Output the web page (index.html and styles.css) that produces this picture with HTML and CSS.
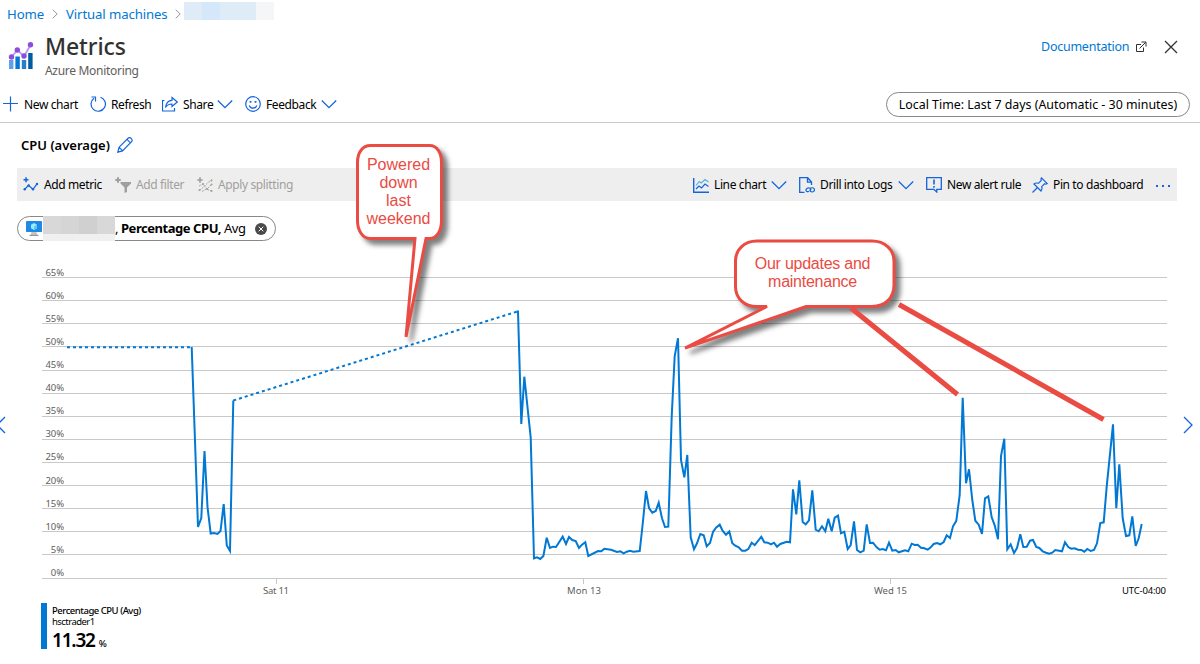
FILE: index.html
```
<!DOCTYPE html>
<html lang="en">
<head>
    <meta charset="UTF-8">
    <meta name="viewport" content="width=device-width, initial-scale=1.0">
    <title>Metrics - Azure Monitoring</title>
    <link rel="stylesheet" href="styles.css">
</head>
<body>
    <svg class="defs" width="0" height="0">
        <symbol id="chevron" viewBox="0 0 16 16"><path d="M.8 4.500l7.200 7.200 7.200-7.200"/></symbol>
        <symbol id="crumb" viewBox="0 0 6 10"><path d="M.7.7L5.200 5 .7 9.300"/></symbol>
    </svg>

    <nav class="breadcrumb">
        <a class="crumb-home">Home</a>
        <svg class="crumb-sep" width="6" height="10"><use href="#crumb"/></svg>
        <a class="crumb-vms">Virtual machines</a>
        <svg class="crumb-sep" width="6" height="10"><use href="#crumb"/></svg>
        <span class="crumb-hidden"></span>
    </nav>

    <header>
        <svg class="logo" width="26" height="30" viewBox="0 0 26 30">
            <rect x="1" y="20" width="4.400" height="9" fill="#5ea0ef"/>
            <rect x="7.400" y="16.500" width="4.400" height="12.500" fill="#0078d4"/>
            <rect x="13.800" y="20" width="4.400" height="9" fill="#2b7cc9"/>
            <rect x="20.200" y="13" width="4.400" height="16" fill="#005ba1"/>
            <path d="M3.500 17l6-7 6.500 6.300 6.500-11" fill="none" stroke="#b796f9" stroke-width="1.800"/>
            <g fill="#8b4ddb"><circle cx="3.500" cy="17" r="2.700"/><circle cx="9.300" cy="10" r="2.700"/><circle cx="16" cy="16" r="2.700"/><circle cx="22.500" cy="4.800" r="2.700"/></g>
        </svg>
        <div class="heading">
            <h1>Metrics</h1>
            <p>Azure Monitoring</p>
        </div>
        <a class="doc-link">Documentation</a>
        <svg class="external" width="12" height="12" viewBox="0 0 12 12"><path d="M6 3.500H1.500v7H8.500V6.500M4.500 7.500L10.500 1.500M6.500 1h4.500v4.500"/></svg>
        <svg class="close" width="14" height="14" viewBox="0 0 14 14"><path d="M1 1l12 12M13 1L1 13"/></svg>
    </header>

    <div class="command-bar">
        <button class="command w-new">
            <svg class="icon" viewBox="0 0 16 16"><path d="M7.500.5v15M0 7.500h15"/></svg><span>New chart</span>
        </button>
        <button class="command w-refresh">
            <svg class="icon" viewBox="0 0 16 16"><path d="M10.500 1.200A7.200 7.200 0 1 1 4 2.200M1.500 1h4v4.500"/></svg><span>Refresh</span>
        </button>
        <button class="command w-share">
            <svg class="icon" viewBox="0 0 16 16"><path d="M2.500 4.500h-2v10.500h12v-3M10 1.500l5.300 4.500-5.300 4.500V8c-3 0-5 1-6.500 3.500C4 7.500 6 4.500 10 4.300z"/></svg><span>Share</span><svg class="icon chev"><use href="#chevron"/></svg>
        </button>
        <button class="command w-feedback">
            <svg class="icon" viewBox="0 0 16 16"><circle cx="8" cy="8" r="7.300"/><path d="M4.200 9.500c1.400 3.600 6.200 3.600 7.600 0"/><path d="M5.500 5v1.800M10.500 5v1.800" stroke-width="1.800"/></svg><span>Feedback</span><svg class="icon chev"><use href="#chevron"/></svg>
        </button>
        <button class="time-range">Local Time: Last 7 days (Automatic - 30 minutes)</button>
    </div>

    <main>
        <div class="chart-title">
            <h2>CPU (average)</h2>
            <svg class="icon" viewBox="0 0 16 16"><path d="M.8 15.200l1.300-5L11.300 1c1.800-1.300 4.700 1.300 3.500 3.500l-9.300 9.400zM10 2.400l3.500 3.500M2.200 10.400l3.300 3.300"/></svg>
        </div>

        <div class="toolbar">
            <button class="command w-metric">
                <svg class="icon" viewBox="0 0 16 16"><path d="M3 .3v5M.5 2.800h5" stroke-width="1.500"/><path d="M1.500 12.500l4-4.200 4.500 4 4-5.500"/><g class="dot"><circle cx="1.700" cy="12.300" r="1.200"/><circle cx="5.700" cy="8.500" r="1.200"/><circle cx="10" cy="12.300" r="1.200"/><circle cx="14" cy="7" r="1.200"/></g></svg><span>Add metric</span>
            </button>
            <button class="command disabled w-filter">
                <svg class="icon" viewBox="0 0 16 16"><path d="M3 .3v5.400M.3 3h5.400" stroke-width="2"/><path class="dot" d="M5.500 5H16v1.500l-4 4V15l-2.500 1v-5.500l-4-4z"/></svg><span>Add filter</span>
            </button>
            <button class="command disabled w-split">
                <svg class="icon" viewBox="0 0 16 16"><path d="M3 .3v5.400M.3 3h5.400" stroke-width="1.600"/><path stroke-width=".9" stroke-dasharray="2 1" d="M2 9l4-2 4 5 5-5M2.500 13.500l4-3.500 4-4L14.500 3M5 14.500l4-2.500 5.500 2"/><g class="dot"><circle cx="6" cy="7" r="1"/><circle cx="2.500" cy="13" r="1"/><circle cx="10" cy="12" r="1"/><circle cx="14.500" cy="3.500" r="1"/><circle cx="14.500" cy="7.500" r="1"/><circle cx="14.500" cy="14" r="1"/></g></svg><span>Apply splitting</span>
            </button>
            <button class="command push w-line">
                <svg class="icon" viewBox="0 0 16 16"><path d="M.7 1v14.300H16" stroke-width="1.400"/><path d="M3 8.500l3.200-4 2 1.500L12 2.500l3.500 2.500" stroke="#50b3d9"/><path d="M3 12l3-3 2.500 2 3.500-4 3.500 2.500"/></svg><span>Line chart</span><svg class="icon chev"><use href="#chevron"/></svg>
            </button>
            <button class="command w-logs">
                <svg class="icon" viewBox="0 0 16 16"><path d="M5.500 15.300H.7V.7h8L12.500 5v3M8.500.7v4.500h4" stroke-width="1.300"/><path d="M10 14.500c-5 1-3-4.500.5-3.500 2 .7 1.500 3 0 3M11.500 11c5-1.500 5 4 1.500 4-2.500 0-2.500-2.500-1-3"/></svg><span>Drill into Logs</span><svg class="icon chev"><use href="#chevron"/></svg>
            </button>
            <button class="command w-alert">
                <svg class="icon" viewBox="0 0 16 16"><path d="M.7.700h14.600v11.600h-4.500V15l-3-2.700H.7z" stroke-width="1.300"/><path d="M8 2.500v5M8 9v1.800" stroke-width="1.600"/></svg><span>New alert rule</span>
            </button>
            <button class="command w-pin">
                <svg class="icon" viewBox="0 0 16 16"><path d="M.5 15.500l5-5M9.500.8l5.700 5.700c-1 .8-2 .6-2.600.3L9.700 9.700c.5 1.700.2 3.200-.7 4.300L2 7c1.200-1 2.800-1.200 4.400-.7l2.900-2.900C8.900 2.500 8.900 1.500 9.500.8z"/></svg><span>Pin to dashboard</span>
            </button>
            <svg class="more" width="16" height="4" viewBox="0 0 16 4"><rect x="1" y="2" width="2" height="2"/><rect x="7" y="2" width="2" height="2"/><rect x="13" y="2" width="2" height="2"/></svg>
        </div>

        <div class="metric-pill">
            <svg width="18" height="16" viewBox="0 0 18 16"><rect x="1" width="16" height="11" rx=".8" fill="#1f8ae6"/><path d="M6.500 11h5l1 3.500h-7z" fill="#c4c4c4"/><rect x="4.500" y="13.800" width="9" height="1.200" fill="#999"/><path d="M9 2l3 1.700v3.500L9 9 6 7.200V3.700z" fill="#9cebff"/><path d="M9 5.300l3-1.600v3.500L9 9z" fill="#50d0f5"/></svg>
            <span class="pill-hidden"></span>
            <span class="pill-text">, <b>Percentage CPU,</b> Avg</span>
            <svg class="remove" width="12" height="12" viewBox="0 0 12 12"><circle cx="6" cy="6" r="6"/><path d="M3.700 3.700l4.600 4.600M8.300 3.700L3.700 8.300"/></svg>
        </div>

        <svg class="chart" width="1200" height="352" viewBox="0 248 1200 352">
            <path class="grid" d="M42 277.500h1125M42 300.500h1125M42 323.500h1125M42 346.500h1125M42 370.500h1125M42 393.500h1125M42 416.500h1125M42 439.500h1125M42 462.500h1125M42 485.500h1125M42 508.500h1125M42 531.500h1125M42 554.500h1125M42 578.500h1125M276.500 579v5M583.500 579v5M890.500 579v5"/>
            <g class="y-axis">
                <text x="64" y="276">65%</text>
                <text x="64" y="299">60%</text>
                <text x="64" y="322">55%</text>
                <text x="64" y="345">50%</text>
                <text x="64" y="368">45%</text>
                <text x="64" y="391">40%</text>
                <text x="64" y="414">35%</text>
                <text x="64" y="437">30%</text>
                <text x="64" y="460">25%</text>
                <text x="64" y="484">20%</text>
                <text x="64" y="507">15%</text>
                <text x="64" y="530">10%</text>
                <text x="64" y="553">5%</text>
                <text x="64" y="576">0%</text>
            </g>
            <g class="x-axis">
                <text x="276" y="594" textLength="26">Sat 11</text>
                <text x="584" y="594" textLength="34">Mon 13</text>
                <text x="890.500" y="594" textLength="33">Wed 15</text>
                <text class="zone" x="1144" y="594" textLength="44">UTC-04:00</text>
            </g>
            <path class="series gap" d="M67 347.300H192"/>
            <path class="series gap" d="M233.300 400.500L518 311.300"/>
            <polyline class="series" points="191.700,347 195,441 198,527 201.300,518 204.500,451 207.500,507 210.700,533.500 214,533 217.400,534 220.500,531 223.700,504 226.800,545.500 230,551 233.300,400.500"/>
            <polyline class="series" points="516.500,311.500 518,311.500 521.300,424 524.300,376.700 530.700,437.500 534,558.300 537,557.300 540.300,559 543.400,556 546.700,537.700 550,548 553,546.700 556,547 562.700,536.700 566,544 569,537 572.300,540 575.700,541 579,548 582,544.700 585.300,542.300 588.300,556 598,551 601.300,551.300 604.300,548.700 611,549.700 617,552 620.300,551.300 623.700,553.300 626.700,551.700 630,550.700 633.300,551.700 639.700,551 642.700,524 646,491 649,508 652.300,512.700 655.700,511 658.700,502.700 662,518.300 665,527 668.300,526.700 671.700,416.700 674.700,356 678,338.300 681,460 684.300,477.300 687.300,455 690.700,537.300 694,549.300 697,543.300 700.300,534 703.700,535.300 706.700,546.300 710,543 713,532 716,527.700 719.700,524.700 722.700,531 726,534.700 729.300,531.500 732.300,543.300 735.300,545.700 738.700,547.300 742,550.700 745.300,550.700 748.300,549 751.700,542.700 754.700,545 761.300,536.700 764.300,542.300 767.700,542.700 771,544.300 774,542.700 777,546.700 780.300,544 786.700,541.700 790,542.300 793,489.300 796.300,514.300 799.300,480.300 802.700,522 805.700,524.300 809,520.300 812.300,490.300 815.700,529.700 818.700,531.300 822,526.300 825.300,531.300 828.300,518.700 831.700,531.300 834.700,517.700 838,515.700 841,533.300 844.300,531.700 847.700,549 850.700,545 854,521.300 857,550 860.300,552.300 863.700,550.700 866.700,524.300 870,543 873,542.700 876.700,547.300 879.700,549.700 882.700,549 886,550.300 889,542.700 892.300,550.700 895.700,550 898.700,552.300 905,550.300 908.300,551.300 911.700,543.700 914.700,545 917.700,544.700 921,547.700 924.300,548.300 927.700,549.700 930.700,547.300 933.700,544 937,543 940.300,544.300 943.700,542 946.700,535.300 950,538 953,526.300 956.300,520.800 959.700,495 962.700,397.700 966,483.300 969,469.300 972.300,500 975.300,520.700 978.700,524.700 982,534 985,498.300 988.300,496.300 991.700,517.300 994.700,525.300 998,539.300 1001,456 1004.300,438.700 1007.300,549.300 1010.700,544.300 1014,553 1017,548 1020.300,534.300 1023.300,547 1026.700,546.700 1030,540.700 1033,540 1036.300,547 1039.300,548 1042.700,551.300 1046,552.700 1049.300,553.700 1052.300,552.700 1055.300,550 1062,551.300 1065,542.300 1068.300,547 1071.300,548.700 1074.700,548.300 1078,549.700 1081.300,550 1084.300,551.700 1087.300,549 1090.700,551 1094,550 1097,543.300 1100.300,523 1103.700,522.300 1106.700,486.700 1113,424.300 1116.300,508.300 1119.300,464.300 1122.700,518.300 1126,536 1129.300,535.300 1132.300,516.300 1135.700,546 1138.700,538.300 1141.700,524"/>
            <path class="pager" d="M5 417l-8 8 8 8M1184 417l8 8-8 8"/>
        </svg>

        <div class="legend">
            <div class="legend-name">Percentage CPU (Avg)</div>
            <div class="legend-resource">hsctrader1</div>
            <div class="legend-value"><span>11.32</span><small>%</small></div>
        </div>
    </main>

    <!-- notes drawn over the chart -->
    <svg class="notes" width="1200" height="664" viewBox="0 0 1200 664">
        <path class="note" d="M370.500 145.500h59c8 0 12 8 12 17v58c0 11-5 18-12 18h-3.500L406 337 415 238.500h-44.500c-8 0-13-8-13-18v-58c0-10 5-17 13-17z"/>
        <path class="note" d="M757 241h115c13 0 22 9 22 20v24c0 13-9 21.500-22 21.500h-66L685 348.200 767 306.500h-10c-13 0-21.500-8.500-21.500-20V261c0-11 8.500-20 21.500-20z"/>
        <path class="arrow" d="M851 308l106.500 86.500M899 304.500l204.500 115"/>
    </svg>
    <div class="note-text powered">Powered<br>down<br>last<br>weekend</div>
    <div class="note-text updates">Our updates and<br>maintenance</div>
</body>
</html>
```
FILE: styles.css
```
* {
    box-sizing: border-box;
}
body {
    margin: 0;
    position: relative;
    width: 1200px;
    height: 664px;
    overflow: hidden;
    background-color: #fff;
    color: #000;
    font-family: "Noto Sans", "Open Sans", sans-serif;
    font-size: 12px;
}
svg {
    flex: none;
}
.defs {
    position: absolute;
}
h1, h2, p {
    margin: 0;
}
a {
    color: #0078d4;
}
button {
    font: inherit;
    color: inherit;
    padding: 0;
    border: none;
    background: none;
    white-space: nowrap;
}
.breadcrumb {
    display: flex;
    align-items: center;
    height: 28px;
    padding-left: 7px;
    font-size: 13.2px;
    letter-spacing: -0.12px;
    white-space: nowrap;
}
.crumb-home {
    width: 45px;
}
.crumb-vms {
    width: 109px;
    margin-left: 8px;
}
.crumb-sep {
    fill: none;
    stroke: #999;
}
.crumb-hidden {
    width: 90px;
    height: 18px;
    margin: -6px 0 0 3px;
    background: linear-gradient(to right, #dfecf8 18px, #d4e8f9 18px 36px, #deecf8 36px 72px, #f4f6f8 72px);
}
header {
    display: flex;
    align-items: flex-start;
    height: 58px;
    padding: 4px 22px 0 8px;
}
.logo {
    margin-top: 8px;
}
.heading {
    flex: 1;
    margin-left: 11px;
}
h1 {
    height: 30px;
    font-size: 23px;
    line-height: 29px;
    font-weight: 500;
    letter-spacing: -0.1px;
    color: #323130;
}
.heading p {
    line-height: 18px;
    letter-spacing: -0.3px;
    color: #605e5c;
}
.doc-link {
    width: 94px;
    margin-top: 5px;
    font-size: 12.5px;
    line-height: 19px;
    letter-spacing: -0.25px;
}
.external, .close {
    fill: none;
    stroke: #323130;
}
.external {
    margin-top: 9px;
}
.close {
    margin: 8px 0 0 17px;
    stroke-width: 1.3;
}
.command-bar {
    display: flex;
    align-items: center;
    height: 37px;
    padding: 0 10px 0 3px;
    border-bottom: 1px solid #c8c8c8;
}
.command {
    display: flex;
    align-items: center;
    height: 20px;
    flex: none;
    letter-spacing: -0.38px;
}
.icon {
    flex: none;
    width: 16px;
    height: 16px;
    fill: none;
    stroke: #1464dc;
    stroke-width: 1.2;
}
.command span {
    margin-left: 5px;
}
.chev {
    margin-left: auto;
    stroke-width: 1.3;
}
.dot {
    fill: #1464dc;
    stroke: none;
}
.disabled {
    color: #a19f9d;
}
.disabled .icon {
    stroke: #a19f9d;
}
.disabled .dot {
    fill: #a19f9d;
}
.w-new { width: 75px; margin-right: 12px; }
.w-refresh { width: 60px; margin-right: 12px; }
.w-share { width: 71px; margin-right: 12px; }
.w-feedback { width: 92px; }
.w-metric { width: 80px; margin-right: 12px; }
.w-filter { width: 70px; margin-right: 12px; }
.w-split { width: 98px; }
.w-line { width: 94px; margin-right: 12px; }
.w-logs { width: 115px; margin-right: 12px; }
.w-alert { width: 94px; margin-right: 12px; }
.w-pin { width: 111px; margin-right: 12px; }
.push {
    margin-left: auto;
}
.time-range {
    width: 304px;
    height: 25px;
    margin-left: auto;
    border: 1px solid #8a8886;
    border-radius: 13px;
    font-size: 12.4px;
}
.chart-title {
    display: flex;
    align-items: center;
    height: 45px;
    padding: 0 0 2px 21px;
}
h2 {
    width: 96px;
    font-size: 13px;
    font-weight: 600;
    white-space: nowrap;
}
.toolbar {
    display: flex;
    align-items: center;
    height: 33px;
    margin: 0 23px 0 17px;
    padding: 0 6px;
    background-color: #eee;
}
.more {
    fill: #1464dc;
}
.metric-pill {
    display: flex;
    align-items: center;
    width: 259px;
    height: 25px;
    margin: 15px 0 7px 17px;
    padding-left: 7px;
    border: 1px solid #8a8886;
    border-radius: 13px;
}
.pill-hidden {
    width: 72px;
    height: 25px;
    background: linear-gradient(to bottom, transparent 18px, #f0f0f0 18px), linear-gradient(to right, #d8d8d8 18px, #d5d5d5 18px 36px, #d0d0d0 36px 54px, #d8d8d8 54px);
}
.pill-text {
    width: 140px;
    font-size: 13px;
    line-height: 20px;
    letter-spacing: -0.45px;
    margin-top: -2px;
    white-space: nowrap;
}
.remove {
    fill: #4a4a4a;
    stroke: #fff;
}
.remove circle {
    stroke: none;
}
.chart {
    display: block;
}
.grid {
    stroke: #c8c8c8;
}
.y-axis, .x-axis {
    fill: #605e5c;
    font-size: 9.5px;
    text-anchor: end;
}
.y-axis {
    letter-spacing: -0.1px;
}
.x-axis {
    text-anchor: middle;
}
.zone {
    fill: #000;
}
.series {
    fill: none;
    stroke: #0078d4;
    stroke-width: 2;
}
.gap {
    stroke-dasharray: 3 3;
}
.pager {
    fill: none;
    stroke: #1464dc;
    stroke-width: 1.3;
}
.legend {
    height: 46px;
    margin: 3px 0 0 41px;
    padding-left: 5px;
    border-left: 6px solid #0078d4;
    white-space: nowrap;
}
.legend-name {
    font-size: 9.5px;
    line-height: 15px;
    font-weight: 500;
    letter-spacing: -0.48px;
}
.legend-resource {
    font-size: 9.5px;
    line-height: 8px;
    letter-spacing: -0.55px;
}
.legend-value {
    display: flex;
    align-items: baseline;
    gap: 4px;
    font-size: 19px;
    line-height: 28px;
    font-weight: 600;
    letter-spacing: -1.2px;
}
.legend-value small {
    font-size: 9.5px;
    font-weight: 500;
    letter-spacing: 0;
}
.notes {
    position: absolute;
    top: 0;
    left: 0;
}
.note {
    fill: #fff;
    stroke: #ea4b43;
    stroke-width: 3;
    filter: drop-shadow(5px 5px 2.5px rgba(0, 0, 0, 0.5));
}
.arrow {
    fill: none;
    stroke: #ea4b43;
    stroke-width: 5;
}
.note-text {
    position: absolute;
    color: #ea4b43;
    font: 16px/18px "Liberation Sans", Arial, sans-serif;
    text-align: center;
}
.powered {
    top: 156px;
    left: 356px;
    width: 85px;
}
.updates {
    top: 255px;
    left: 735px;
    width: 155px;
    letter-spacing: -0.25px;
}
```
